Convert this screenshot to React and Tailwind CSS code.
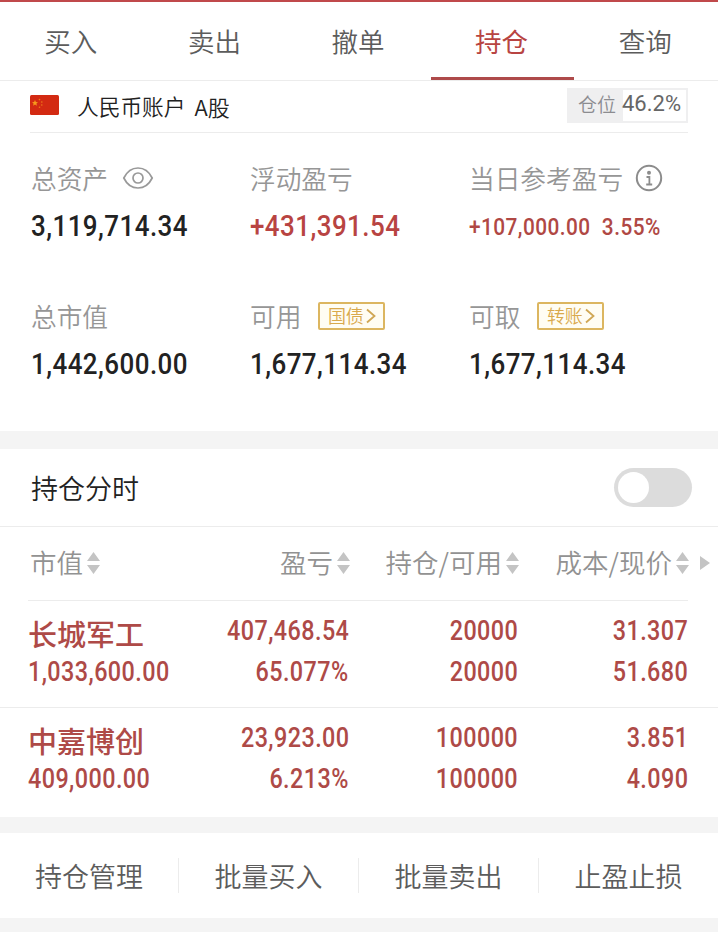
import clsx from "clsx";

const tabs = ["买入", "卖出", "撤单", "持仓", "查询"];

const holdings = [
  {
    name: "长城军工",
    marketValue: "1,033,600.00",
    profit: "407,468.54",
    profitRate: "65.077%",
    amount: "20000",
    available: "20000",
    cost: "31.307",
    price: "51.680",
  },
  {
    name: "中嘉博创",
    marketValue: "409,000.00",
    profit: "23,923.00",
    profitRate: "6.213%",
    amount: "100000",
    available: "100000",
    cost: "3.851",
    price: "4.090",
  },
];

const actions = ["持仓管理", "批量买入", "批量卖出", "止盈止损"];

function Num({ children, className }) {
  return (
    <span className={clsx("inline-block whitespace-nowrap font-['Roboto',sans-serif]", className)}>
      {children}
    </span>
  );
}

function FlagIcon() {
  return (
    <svg width="29" height="20" viewBox="0 0 29 20" className="-mt-1">
      <rect width="29" height="20" rx="1.5" fill="#d32a12" />
      <path d="M5 5l.9 2 2.1.2-1.6 1.4.5 2.1L5 9.600l-1.900 1.100.5-2.100L2 7.200 4.100 7z" fill="#f79a1c" />
      <g fill="#ee7a1a">
        <circle cx="9.500" cy="4.600" r="0.800" />
        <circle cx="11.800" cy="7" r="0.800" />
        <circle cx="11.800" cy="10" r="0.800" />
        <circle cx="9.500" cy="12.300" r="0.800" />
      </g>
    </svg>
  );
}

function EyeIcon() {
  return (
    <svg width="32" height="24" viewBox="0 0 32 24" fill="none" stroke="#999" strokeWidth="1.700">
      <path d="M1.800 12C5 5.500 10 2 16 2s11 3.500 14.200 10C27 18.500 22 22 16 22S5 18.500 1.800 12z" />
      <circle cx="16" cy="12" r="5" />
    </svg>
  );
}

function InfoIcon() {
  return (
    <svg width="28" height="28" viewBox="0 0 28 28" fill="none" stroke="#8c8c8c" strokeWidth="2">
      <circle cx="14" cy="14" r="12.200" />
      <circle cx="14" cy="8.800" r="2" fill="#8c8c8c" stroke="none" />
      <path d="M11.500 13h2.900v7.500M11.200 20.500h6" strokeWidth="1.800" />
    </svg>
  );
}

function SortIcon() {
  return (
    <svg width="13" height="22" viewBox="0 0 13 22" fill="#c4c4c4" className="ml-1 shrink-0">
      <path d="M6.500 0L13 9H0zM6.500 22L13 13H0z" />
    </svg>
  );
}

function Tag({ children }) {
  return (
    <span className="flex h-7 w-[67px] items-center justify-center gap-0.5 rounded-[2px] border-2 border-[#dcb660] bg-[#fffdf3] text-[18px] leading-none text-[#d9a94c]">
      <span className="-mt-0.5">{children}</span>
      <svg width="10" height="16" viewBox="0 0 10 16" fill="none" stroke="#d0a754" strokeWidth="1.800">
        <path d="M1 1.500L8.500 8 1 14.500" />
      </svg>
    </span>
  );
}

function Stat({ label, extra, children }) {
  return (
    <div className="flex flex-col">
      <div className="flex h-9 items-center whitespace-nowrap text-[25.700px] font-[350] text-[#969696]">
        <span className="-mt-0.5">{label}</span>
        {extra}
      </div>
      <div className="mt-2.5 flex h-10 items-center">{children}</div>
    </div>
  );
}

function StatValue({ children, className }) {
  return (
    <Num className={clsx("origin-left scale-x-[0.895] text-[29px] font-medium tracking-[0.5px]", className)}>
      {children}
    </Num>
  );
}

function HeaderCell({ children, className }) {
  return (
    <div className={clsx("flex items-center whitespace-nowrap", className)}>
      <span className="-mt-0.5">{children}</span>
      <SortIcon />
    </div>
  );
}

function CellValue({ children, className }) {
  return (
    <Num className={clsx("h-[41px] scale-x-[0.865] text-[27px] leading-[42px] font-medium tracking-[0.5px]", className)}>
      {children}
    </Num>
  );
}

function PairCell({ top, bottom }) {
  return (
    <div className="flex flex-col items-end">
      <CellValue className="origin-right">{top}</CellValue>
      <CellValue className="origin-right">{bottom}</CellValue>
    </div>
  );
}

function HoldingRow({ item }) {
  return (
    <div className="grid h-[107px] grid-cols-[151px_170px_169px_170px] pt-[9px] pl-7 text-[#ae4a47]">
      <div className="flex flex-col items-start">
        <div className="h-[41px] pt-[3px] text-[29px] leading-[41px] font-medium whitespace-nowrap">{item.name}</div>
        <CellValue className="origin-left">{item.marketValue}</CellValue>
      </div>
      <PairCell top={item.profit} bottom={item.profitRate} />
      <PairCell top={item.amount} bottom={item.available} />
      <PairCell top={item.cost} bottom={item.price} />
    </div>
  );
}

export default function App() {
  return (
    <div className="flex h-[932px] w-[718px] flex-col overflow-hidden bg-white font-['Noto_Sans_CJK_SC',sans-serif] text-[#333]">
      {/* Tabs */}
      <nav className="grid h-[81px] shrink-0 grid-cols-5 border-t-2 border-b border-t-[#c0494b] border-b-[#ececec]">
        {tabs.map((tab) => (
          <div
            key={tab}
            className={clsx(
              "flex items-center justify-center border-b-[3px] pt-0.5 pr-0.5 text-[26.500px]",
              tab === "持仓" ? "border-[#ae4a4a] text-[#b84442]" : "border-transparent font-[350] text-[#5c5c5c]"
            )}
          >
            {tab}
          </div>
        ))}
      </nav>

      {/* Account */}
      <div className="mx-[30px] flex h-[52px] shrink-0 items-center border-b border-[#ececec]">
        <FlagIcon />
        <span className="ml-[18px] text-[21.700px] font-[350] text-[#222]">人民币账户</span>
        <span className="ml-[9px] text-[22px] font-[350] text-[#222]">A股</span>
        <div className="mb-0.5 ml-auto flex h-[35px] w-[121px] border-2 border-[#efeff0] bg-white">
          <span className="w-[54px] shrink-0 bg-[#efeff0] pl-[9px] text-[19px] leading-[27px] font-[350] whitespace-nowrap text-[#8c8c90]">
            仓位
          </span>
          <Num className="-ml-px text-[22px] leading-[27px] text-[#666]">46.2%</Num>
        </div>
      </div>

      {/* Summary */}
      <div className="grid h-[298px] shrink-0 grid-cols-[219px_219px_1fr] grid-rows-[138px_1fr] pt-7 pl-[31px] text-[#222]">
        <Stat label="总资产" extra={<span className="-mt-0.5 ml-3.5"><EyeIcon /></span>}>
          <StatValue>3,119,714.34</StatValue>
        </Stat>
        <Stat label="浮动盈亏">
          <StatValue className="text-[#b84442]">+431,391.54</StatValue>
        </Stat>
        <Stat label="当日参考盈亏" extra={<span className="-mt-0.5 ml-3"><InfoIcon /></span>}>
          <Num className="mt-0.5 origin-left scale-x-[0.905] text-[23px] font-medium tracking-[0.5px] whitespace-pre text-[#b04844]">
            {"+107,000.00  3.55%"}
          </Num>
        </Stat>
        <Stat label="总市值">
          <StatValue>1,442,600.00</StatValue>
        </Stat>
        <Stat label="可用" extra={<span className="-mt-0.5 ml-[17px]"><Tag>国债</Tag></span>}>
          <StatValue>1,677,114.34</StatValue>
        </Stat>
        <Stat label="可取" extra={<span className="-mt-0.5 ml-[17px]"><Tag>转账</Tag></span>}>
          <StatValue>1,677,114.34</StatValue>
        </Stat>
      </div>

      <div className="h-[18px] shrink-0 bg-[#f4f4f4]" />

      {/* Intraday switch */}
      <div className="flex h-[78px] shrink-0 items-center justify-between border-b border-[#ececec] pr-[26px] pl-[31px]">
        <span className="pt-0.5 text-[27px] font-[350] text-[#222]">持仓分时</span>
        <div className="flex h-[39px] w-[78px] items-center rounded-full bg-[#dcdcdc] px-1">
          <div className="size-[31px] rounded-full bg-white" />
        </div>
      </div>

      {/* Holdings */}
      <div className="flex h-[73px] shrink-0 items-center pb-0.5 text-[26.500px] font-[350] text-[#929292]">
        <div className="grid grid-cols-[150px_170px_169px_170px] pl-[30px]">
          <HeaderCell>市值</HeaderCell>
          <HeaderCell className="justify-end">盈亏</HeaderCell>
          <HeaderCell className="justify-end">持仓/可用</HeaderCell>
          <HeaderCell className="justify-end">成本/现价</HeaderCell>
        </div>
        <svg width="10" height="14" viewBox="0 0 10 14" fill="#c4c4c4" className="ml-[11px]">
          <path d="M0 0l10 7-10 7z" />
        </svg>
      </div>
      <div className="mr-[30px] ml-7 h-px shrink-0 bg-[#ececec]" />
      <HoldingRow item={holdings[0]} />
      <div className="-mt-px h-px shrink-0 bg-[#ececec]" />
      <HoldingRow item={holdings[1]} />

      {/* Actions */}
      <div className="mt-[2px] h-4 shrink-0 bg-[#f4f4f4]" />
      <div className="grid h-[85px] shrink-0 grid-cols-[179px_180px_180px_179px] items-center">
        {actions.map((action, i) => (
          <div
            key={action}
            className={clsx(
              "flex h-[35px] items-center justify-center pt-0.5 text-[27px] font-[350] text-[#5c5c5c]",
              i < actions.length - 1 && "border-r border-[#ececec]"
            )}
          >
            {action}
          </div>
        ))}
      </div>
      <div className="flex-1 bg-[#f4f4f4]" />
    </div>
  );
}
